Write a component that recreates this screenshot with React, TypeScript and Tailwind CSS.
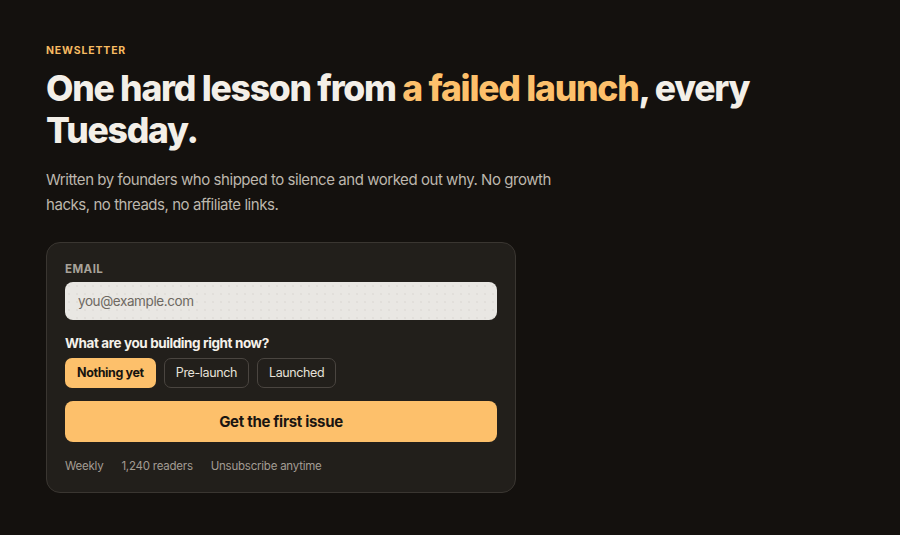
import React, { useState } from "react";

const stages = ["Nothing yet", "Pre-launch", "Launched"];

export default function App() {
  const [stage, setStage] = useState("Nothing yet");
  const [email, setEmail] = useState("");

  return (
    <div className="min-h-screen bg-[#14110e] font-['Inter','Liberation_Sans',sans-serif] text-[#f3efe8]">
      <div className="px-[46px] pt-[43px] pb-10">
        <p className="text-[10.5px] font-bold uppercase tracking-[0.08em] text-[#f7bb62]">Newsletter</p>

        <h1 className="mt-[9px] max-w-[760px] text-[35.5px] leading-[42px] font-extrabold tracking-[-0.035em] text-[#f3efe8]">
          One hard lesson from <span className="text-[#fdc06b]">a failed launch</span>, every Tuesday.
        </h1>

        <p className="mt-[15px] max-w-[525px] text-[15px] leading-[25px] tracking-[-0.03em] text-[#bdb7ad]">
          Written by founders who shipped to silence and worked out why. No growth hacks, no threads, no affiliate links.
        </p>

        {/* Signup card */}
        <form
          onSubmit={(e) => e.preventDefault()}
          className="mt-[25px] w-[470px] rounded-[14px] border border-[#3a3631] bg-[#221f1b] px-[18px] pt-[18px] pb-[16px]"
        >
          <label className="block text-[11.5px] font-bold uppercase tracking-[0.04em] text-[#a8a299]">Email</label>
          <input
            type="email"
            value={email}
            onChange={(e) => setEmail(e.target.value)}
            placeholder="you@example.com"
            className="mt-[4px] h-[38px] w-full rounded-[8px] bg-[#e9e7e3] bg-[radial-gradient(#d8d5d0_0.6px,transparent_0.8px)] bg-[length:8px_8px] px-[13px] text-[13.5px] tracking-[-0.03em] text-[#2a2520] outline-none placeholder:text-[#6e6962]"
          />

          <p className="mt-[13px] text-[13.5px] font-bold tracking-[-0.03em] text-[#f5f1ea]">What are you building right now?</p>
          <div className="mt-[5px] flex gap-[8px]">
            {stages.map((s) => (
              <button
                key={s}
                type="button"
                onClick={() => setStage(s)}
                className={`h-[30px] rounded-[7px] text-[12.5px] tracking-[-0.03em] ${
                  stage === s
                    ? "bg-[#fdc06b] px-[12px] font-bold text-[#17130f]"
                    : "border border-[#4a4540] px-[11px] text-[#e6e1d9]"
                }`}
              >
                {s}
              </button>
            ))}
          </div>

          <button
            type="submit"
            className="mt-[13px] h-[41px] w-full rounded-[8px] bg-[#fdc06b] text-[15px] font-bold tracking-[-0.02em] text-[#1a1511]"
          >
            Get the first issue
          </button>

          <div className="mt-[16px] flex gap-[18px] text-[11.5px] tracking-[-0.02em] text-[#a29c93]">
            <span>Weekly</span>
            <span>1,240 readers</span>
            <span>Unsubscribe anytime</span>
          </div>
        </form>
      </div>
    </div>
  );
}
